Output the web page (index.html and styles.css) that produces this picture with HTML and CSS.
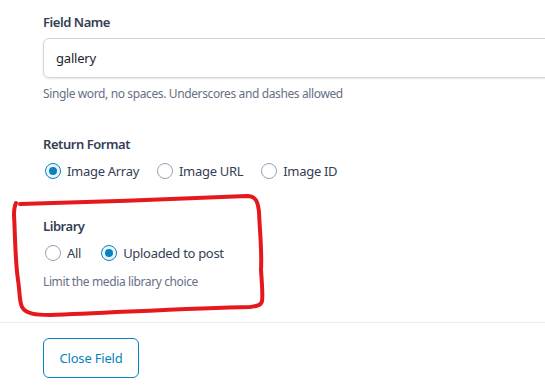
FILE: index.html
```html
<!DOCTYPE html>
<html>
<head>
<meta charset="utf-8">
<link rel="stylesheet" href="styles.css">
</head>
<body>
<div class="page">
  <div class="settings">
    <div class="field field-name">
      <label class="field-label">Field Name</label>
      <div class="input">gallery</div>
      <p class="help">Single word, no spaces. Underscores and dashes allowed</p>
    </div>
    <div class="field field-return">
      <label class="field-label">Return Format</label>
      <div class="radios">
        <span class="opt"><span class="radio checked"></span>Image Array</span>
        <span class="opt"><span class="radio"></span>Image URL</span>
        <span class="opt"><span class="radio"></span>Image ID</span>
      </div>
    </div>
    <div class="field field-library">
      <label class="field-label">Library</label>
      <div class="radios">
        <span class="opt"><span class="radio"></span>All</span>
        <span class="opt"><span class="radio checked"></span>Uploaded to post</span>
      </div>
      <p class="help help-lib">Limit the media library choice</p>
    </div>
  </div>
  <div class="footer">
    <button class="btn">Close Field</button>
  </div>
  <svg class="annot" width="545" height="390" viewBox="0 0 545 390">
    <path d="M20 204 C90 202 180 199 247 196 C256 196 258 202 259 212 C260 235 262 250 261 270 C262 285 263 296 262 301 C261 306 256 306 250 307 C190 308 110 313 50 315 C36 315 26 314 22 307 C19 300 20 292 18 280 C15 260 15 230 14 215 C14 208 15 205 16 203"
      fill="none" stroke="#e5191c" stroke-width="4" stroke-linecap="round" stroke-linejoin="round"/>
  </svg>
</div>
</body>
</html>
```
FILE: styles.css
```css
* { box-sizing: border-box; }
html, body { margin: 0; padding: 0; background: #fff; }
body {
  font-family: "Noto Sans", "Open Sans", sans-serif;
  color: #344054;
  overflow: hidden;
}
.page {
  position: relative;
  width: 545px;
  height: 390px;
  overflow: hidden;
}
.settings {
  padding: 12px 0 0 43px;
}
.field-label {
  display: block;
  font-size: 13px;
  line-height: 20px;
  font-weight: 600;
  letter-spacing: -0.45px;
  color: #344054;
}
.input {
  margin-top: 6px;
  width: 620px;
  height: 40px;
  border: 1px solid #d0d5dd;
  border-radius: 6px;
  box-shadow: 0 1px 2px rgba(16, 24, 40, 0.1);
  padding: 0 12px;
  font-size: 13px;
  line-height: 38px;
  letter-spacing: -0.2px;
  color: #1d2327;
}
.help {
  margin: 6px 0 0;
  font-size: 12px;
  line-height: 20px;
  letter-spacing: -0.38px;
  color: #667085;
}
.field-return { margin-top: 30px; }
.field-library { margin-top: 35px; }
.radios {
  margin-top: 7px;
  display: flex;
  align-items: center;
  height: 20px;
  gap: 18px;
  font-size: 13px;
  letter-spacing: -0.3px;
  color: #344054;
}
.field-library .radios { gap: 20px; }
.opt {
  display: flex;
  align-items: center;
  margin-left: 2px;
  gap: 6px;
}
.opt + .opt { margin-left: 0; }
.radio {
  width: 16px;
  height: 16px;
  border-radius: 50%;
  border: 1px solid #98a2b3;
  background: #fff;
  position: relative;
  flex: none;
}
.radio.checked {
  border-color: #0783be;
  background: #ebf5fa;
}
.radio.checked::after {
  content: "";
  position: absolute;
  left: 3px;
  top: 3px;
  width: 8px;
  height: 8px;
  border-radius: 50%;
  background: #0783be;
}
.help-lib { margin-top: 9px; }
.footer {
  margin-top: 30px;
  border-top: 1px solid #eaecf0;
  padding: 15px 0 0 43px;
}
.btn {
  width: 96px;
  height: 40px;
  border: 1px solid #0783be;
  border-radius: 6px;
  background: #fff;
  color: #0783be;
  font-family: "Noto Sans", "Open Sans", sans-serif;
  font-size: 13px;
  letter-spacing: -0.2px;
  padding: 0;
}
.annot {
  position: absolute;
  left: 0;
  top: 0;
  pointer-events: none;
}
```
